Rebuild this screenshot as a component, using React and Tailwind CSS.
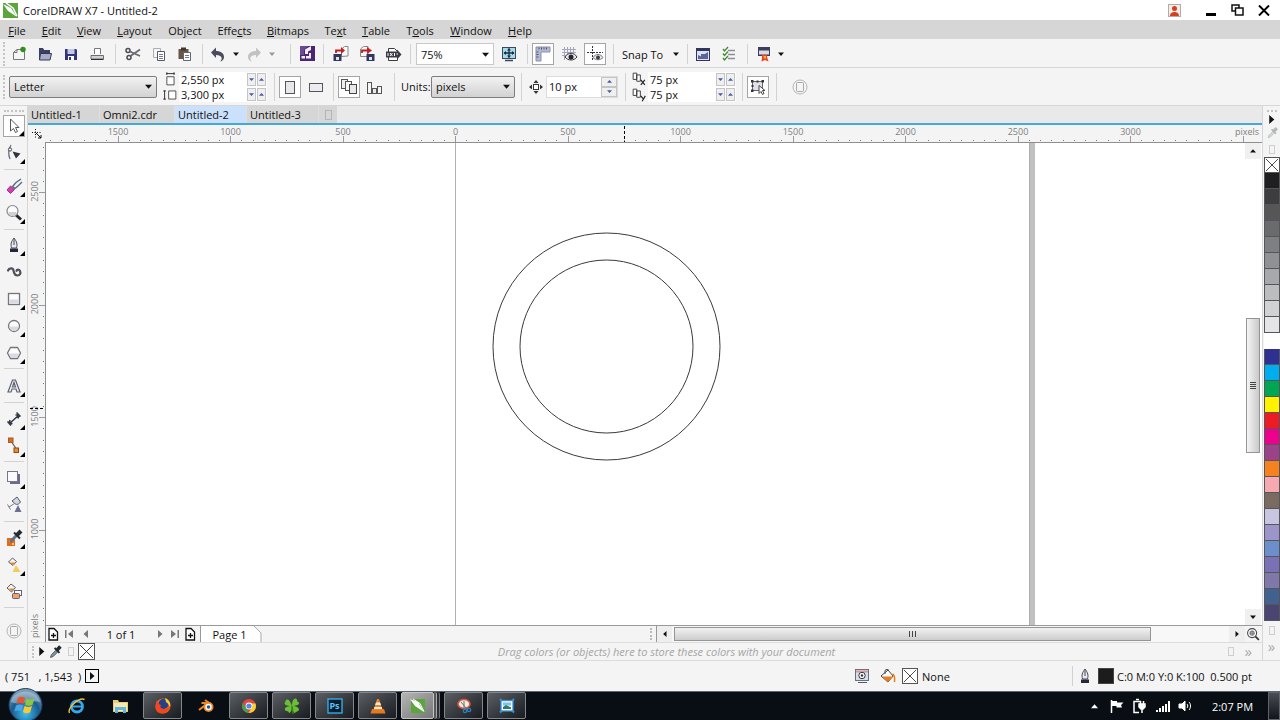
import React, { useState } from 'react';

const Icon = ({ size = 20, children, className = '' }) => (
  <svg
    xmlns="http://www.w3.org/2000/svg"
    width={size}
    height={size}
    viewBox="0 0 20 20"
    fill="none"
    className={`shrink-0 ${className}`}
  >
    {children}
  </svg>
);

const icons = {
  newDoc: (
    <>
      <path d="M4.500 15.500V8.500L8 5.500h7.500v10z" fill="#f6f6f6" stroke="#77777c" />
      <path d="M4.500 8.500H8v-3" stroke="#77777c" />
      <circle cx="14" cy="5.500" r="2.700" fill="#2f8f1f" />
    </>
  ),
  open: (
    <>
      <path d="M4 16V4h4l1 2h6v3" fill="#3c3f66" />
      <path d="M4 16V5h4l1 1.500h6V16z" fill="#3c3f66" />
      <path d="M5.500 9.500h11L15 16H4.500z" fill="#a9acc4" stroke="#33365c" />
    </>
  ),
  save: (
    <>
      <path d="M4 5h11l1 1v10H4z" fill="#33347a" />
      <rect x="6.500" y="5" width="7" height="5" fill="#c4c8e6" />
      <rect x="7" y="12" width="6" height="4" fill="#fff" />
      <rect x="8" y="13" width="2" height="3" fill="#33347a" />
    </>
  ),
  print: (
    <>
      <path d="M7.500 10V4.500h6V10" fill="#fff" stroke="#77777f" />
      <path d="M4 11.500h12.500v3.500H4z" fill="#d2d2d6" stroke="#6c6c72" />
      <path d="M4 15.500h12.500" stroke="#2f2f33" />
    </>
  ),
  cut: (
    <>
      <circle cx="5" cy="6.500" r="2" stroke="#4a4a52" strokeWidth="1.500" />
      <circle cx="6" cy="13.500" r="2" stroke="#4a4a52" strokeWidth="1.500" />
      <path d="M7 7.500l10 4.500M7.500 12L17 5.500" stroke="#6a6a70" strokeWidth="1.800" />
    </>
  ),
  copy: (
    <>
      <path d="M4.500 4.500h7v9h-7z" fill="#f4f6f6" stroke="#a9b0b0" />
      <path d="M8.500 7.500h7v9h-7z" fill="#fff" stroke="#55586e" />
      <path d="M10 10.500h4M10 12.500h4M10 14.500h4" stroke="#777b92" />
    </>
  ),
  paste: (
    <>
      <path d="M3.500 5h10v10h-10z" fill="#6a5546" />
      <rect x="6" y="3.500" width="5" height="3" fill="#43362e" />
      <path d="M8.500 8.500h7v8h-7z" fill="#fff" stroke="#5a6a70" />
      <path d="M10 11.500h4M10 13.500h4" stroke="#778" />
    </>
  ),
  undo: <path d="M3 8.500L8 3.500V7c5 0 8 2.500 8 6 0 2.500-1.500 4-4 4.500 1.500-1.500 2-2.500 1.500-4C13 12 11 11 8 11v3z" fill="#4a4c5e" />,
  redo: <path d="M17 8.500L12 3.500V7c-5 0-8 2.500-8 6 0 2.500 1.500 4 4 4.500-1.500-1.500-2-2.500-1.500-4C7 12 9 11 12 11v3z" fill="#c2c2c2" />,
  connect: (
    <>
      <rect x="3" y="2" width="15" height="15" fill="#4a2575" />
      <path d="M3 2h8L7 6v5H3z" fill="#6b4a94" />
      <path d="M8 5.500l6-3.500v4l-3 1.500V10H8z" fill="#f1ecf7" />
      <path d="M12 9h2v5.500H9V12h3zM4.500 12H8v2.500H4.500z" fill="#f1ecf7" />
    </>
  ),
  importIcon: (
    <>
      <path d="M10.500 12.500V5l3-2.500h3.500v9.500z" fill="#f8f8f8" stroke="#888" />
      <rect x="2.500" y="10" width="8" height="7" fill="#33365c" />
      <rect x="5" y="13" width="3" height="3" fill="#dfe1ee" />
      <path d="M5 9V6.500h6" stroke="#b52222" strokeWidth="1.800" />
      <path d="M10 3l4 3.500-4 3.500z" fill="#c42020" />
    </>
  ),
  exportIcon: (
    <>
      <path d="M3.500 12.500V5l3-2.500h4.500v10z" fill="#f8f8f8" stroke="#888" />
      <rect x="9.500" y="10" width="8" height="7" fill="#33365c" />
      <rect x="12" y="13" width="3" height="3" fill="#dfe1ee" />
      <path d="M5 9V6.500h6" stroke="#b52222" strokeWidth="1.800" />
      <path d="M10 3l5 3.500-5 3.500z" fill="#c42020" />
    </>
  ),
  pdf: (
    <>
      <path d="M5.500 16.500v-12h6l3 3v9z" fill="#fff" stroke="#3b3b40" />
      <path d="M3 7.500h11V5.500l4.500 5-4.500 5v-2H3z" fill="#3b3b44" />
      <path d="M5 9v3M7 9l2.500 3M9.500 9L7 12M11.500 9v3M13.500 10h1.500" stroke="#fff" />
    </>
  ),
  fullScreen: (
    <>
      <rect x="3.500" y="3.500" width="13" height="11" fill="#a5dbe8" stroke="#3a4a5c" />
      <path d="M6 16.500h8" stroke="#3a4a5c" strokeWidth="1.500" />
      <path d="M10 4.500v9M5 9h10" stroke="#1c2e44" strokeWidth="1.300" />
      <path d="M10 4L8 6.500h4zM10 14l-2-2.500h4zM4.500 9L7 7v4zM15.500 9L13 7v4z" fill="#1c2e44" />
    </>
  ),
  rulers: (
    <>
      <path d="M3 3h14v5H8v9H3z" fill="#b4b9d2" stroke="#8a8fac" />
      <path d="M6 3.500v2M8.500 3.500v2M11 3.500v2M13.500 3.500v2M3.500 8h2M3.500 10.500h2M3.500 13h2" stroke="#4d5273" />
    </>
  ),
  grid: (
    <>
      <path d="M5.500 3v13M8.500 3v10M11.500 3v5M14.500 3v5M3 5.500h14M3 8.500h14M3 11.500h5" stroke="#a4a7ba" />
      <path d="M6 13c3-5 9-5 12 0-3 4-9 4-12 0z" fill="#e9e9ec" stroke="#36363c" />
      <circle cx="12" cy="13" r="2.500" fill="#26262a" />
    </>
  ),
  guides: (
    <>
      <path d="M2 8.500h16M7.500 2v15" stroke="#333" strokeDasharray="2 1" />
      <path d="M8 13.500c2.500-4 7.500-4 10 0-2.500 3-7.500 3-10 0z" fill="#e9e9ec" stroke="#77777d" />
      <circle cx="13" cy="13.500" r="2" fill="#3b3b40" />
    </>
  ),
  welcome: (
    <>
      <rect x="3.500" y="4.500" width="13" height="12" fill="#dfe2f0" stroke="#33365c" />
      <rect x="3" y="4" width="14" height="3" fill="#33365c" />
      <path d="M5 15v-4l3 1.500V10h4l3-2v7z" fill="#5e649a" />
    </>
  ),
  options: (
    <>
      <path d="M4 5l1.500 2L9 3M4 9.500l1.500 2L9 7.500M4 14l1.500 2L9 12" stroke="#3f8a35" strokeWidth="1.300" />
      <path d="M9 6.500h7M9 10.500h7M9 14.500h7" stroke="#8d9098" strokeWidth="1.500" />
    </>
  ),
  launcher: (
    <>
      <rect x="4" y="3" width="12" height="9" fill="#3a3f5e" />
      <rect x="5" y="6.500" width="10" height="4" fill="#d9dbe6" />
      <path d="M8 11h5v2l1.500 4.500-3.500-1.500-3.500 1.500L8 14z" fill="#e8461e" />
      <path d="M9.500 12h2.500v2.500h-2z" fill="#fbb32b" />
    </>
  ),
  width: (
    <>
      <path d="M6.500 7.500h8v9h-8z" fill="#fff" stroke="#444" />
      <path d="M6 4h9M6.500 2.500v3M14.500 2.500v3" stroke="#222" />
    </>
  ),
  height: (
    <>
      <path d="M8.500 5.500h8v9h-8z" fill="#fff" stroke="#444" />
      <path d="M4 5v10M2.500 5.500h3M2.500 14.500h3" stroke="#222" />
    </>
  ),
  portrait: <rect x="5.500" y="4.500" width="9" height="12" fill="#e7e7ec" stroke="#55555c" />,
  landscape: <rect x="3.500" y="6.500" width="13" height="8" fill="#ececf0" stroke="#55555c" />,
  allPages: (
    <>
      <rect x="2.500" y="2.500" width="6" height="9" fill="#eee" stroke="#555" />
      <rect x="6.500" y="4.500" width="6" height="9" fill="#f6f6f6" stroke="#555" />
      <rect x="10.500" y="7.500" width="7" height="9" fill="#e7e7ec" stroke="#444" />
    </>
  ),
  curPage: (
    <>
      <rect x="2.500" y="5.500" width="4" height="11" fill="#f6f6f6" stroke="#555" />
      <rect x="7.500" y="11.500" width="4" height="5" fill="#e7e7ec" stroke="#555" />
      <rect x="12.500" y="9.500" width="4" height="7" fill="#f6f6f6" stroke="#555" />
    </>
  ),
  nudge: (
    <>
      <rect x="7.500" y="7.500" width="5" height="5" fill="#fff" stroke="#333" />
      <path d="M10 3L7.500 6h5zM10 17l-2.500-3h5zM3 10l3-2.500v5zM17 10l-3-2.500v5z" fill="#333" />
    </>
  ),
  dupX: (
    <>
      <path d="M3.500 3.500h4v7h-4zM7.500 5.500h4v7h-4z" fill="#fff" stroke="#333" />
      <path d="M12 11l4.500 5.500M16.500 11L12 16.500" stroke="#222" strokeWidth="1.300" />
    </>
  ),
  dupY: (
    <>
      <path d="M3.500 3.500h4v7h-4zM7.500 5.500h4v7h-4z" fill="#fff" stroke="#333" />
      <path d="M12 11l2.500 3M17 11l-3.500 6" stroke="#222" strokeWidth="1.300" />
    </>
  ),
  treat: (
    <>
      <rect x="4.500" y="4.500" width="10" height="9" fill="#dfe0ea" stroke="#666" />
      <path d="M3 3h2.500v2.500H3zM13.500 3H16v2.500h-2.500zM3 12.500h2.500V15H3zM8.500 3.500h2v2h-2zM3.500 8h2v2h-2z" fill="#333" />
      <path d="M11 8.500v8l2-2 1.500 3 1.500-1-1.500-3H17z" fill="#fff" stroke="#444" />
    </>
  ),
  quick: (
    <>
      <circle cx="10" cy="10" r="7" stroke="#b5b5b5" />
      <rect x="6.500" y="5.500" width="7" height="9" rx="1" fill="#f4f4f4" stroke="#a9a9a9" />
    </>
  ),
  pick: <path d="M6.500 3v12l3-2.500 2 4 2-1-2-4h3.500z" fill="#fff" stroke="#55555c" />,
  shape: (
    <>
      <path d="M7 2c-3 5-3 9-1 14" stroke="#66708a" strokeWidth="1.300" />
      <circle cx="6" cy="6.500" r="1.600" fill="#fff" stroke="#444" />
      <path d="M8.500 8.500l8 2-4.500 5z" fill="#2d3340" />
    </>
  ),
  eraser: (
    <>
      <path d="M3 14l3.500-4 4 3.500-4 4z" fill="#d33fb0" stroke="#a82d8c" />
      <path d="M8 10l3 3" stroke="#6c7588" strokeWidth="2" />
      <path d="M9 10l3-3.500L17 3M11 12.500l3.500-3L18 6" stroke="#5a6a80" strokeWidth="1.400" />
    </>
  ),
  zoom: (
    <>
      <path d="M12 12l5 4.500" stroke="#22252e" strokeWidth="3" />
      <circle cx="8.500" cy="8" r="5.500" fill="#fbfbfc" stroke="#85858c" strokeWidth="1.200" />
      <path d="M4.500 9h8a4 4 0 0 1-8 0z" fill="#cfcfd6" />
    </>
  ),
  pen: (
    <>
      <path d="M10 3c3 4 3.500 6 2.500 10h-5C6.500 9 7 7 10 3z" fill="#e9e9ee" stroke="#444a58" />
      <path d="M10 4v6" stroke="#444a58" />
      <rect x="6" y="13.500" width="8" height="3.500" fill="#222835" />
    </>
  ),
  artistic: (
    <path
      d="M4 8.500C5 6 9 5.500 9.500 8.500c.500 3 1.500 5 4 5s3.500-2.500 2.500-4.500-3.500-1.500-3.500 0"
      stroke="#50505a"
      strokeWidth="2.200"
      strokeLinecap="round"
    />
  ),
  rect: (
    <>
      <rect x="4.500" y="4.500" width="11" height="11" fill="#fdfdfd" stroke="#75757e" strokeWidth="1.300" />
      <path d="M5.500 10.500h9v4h-9z" fill="#dadae2" />
    </>
  ),
  ellipse: (
    <>
      <circle cx="10" cy="10" r="5.500" fill="#fdfdfd" stroke="#75757e" strokeWidth="1.300" />
      <path d="M5.500 10.500h9a4.500 4.500 0 0 1-9 0z" fill="#dadae2" />
    </>
  ),
  polygon: (
    <>
      <path d="M6.500 4.500h7l3 5.500-3 5.500h-7L3.500 10z" fill="#fdfdfd" stroke="#75757e" strokeWidth="1.300" />
      <path d="M5 10.500h10l-2 4H7z" fill="#dadae2" />
    </>
  ),
  textTool: (
    <path
      d="M4 16l4.500-12h3L16 16h-3l-1-3H8l-1 3zM8.500 11h3L10 6.500z"
      fill="#f2f2f6"
      stroke="#5d6070"
      strokeWidth="1.200"
    />
  ),
  dimension: <path d="M3.500 12.500l3.500 4M5 15l10-9M12.500 3.500l4 4M5 15l1-4M5 15l3.500-.500M15 6l-1 3.500M15 6h-3.500" stroke="#333845" strokeWidth="1.500" />,
  connector: (
    <>
      <path d="M7 5l6 9" stroke="#5a5a60" strokeWidth="1.200" />
      <rect x="4.500" y="2" width="4.500" height="4.500" fill="#d96d1c" stroke="#a85a20" />
      <rect x="10" y="12" width="4.500" height="4.500" fill="#f08a2d" stroke="#8f4a15" />
    </>
  ),
  shadow: (
    <>
      <rect x="6" y="6" width="10" height="10" fill="#6c6c8a" />
      <rect x="3.500" y="3.500" width="10" height="10" fill="#fbfbfd" stroke="#77778a" />
    </>
  ),
  transparency: (
    <>
      <path d="M8 6l5-4 3.500 5c-2 3-5 3-6 1z" fill="#d4d6e4" stroke="#565a78" />
      <path d="M10.500 8.500L5 12M3.500 9.500l3 5" stroke="#77778a" />
      <path d="M14 10l3.500 7h-7z" fill="#6d7090" />
    </>
  ),
  eyedropper: (
    <>
      <rect x="3" y="10" width="8" height="8" fill="#e66a13" />
      <path d="M5 12h2v2H5zM8 15h2v2H8z" fill="#ffc878" />
      <path d="M6 14l7-7" stroke="#62718a" strokeWidth="3" />
      <path d="M10 4.500l6 6" stroke="#262a33" strokeWidth="2" />
      <path d="M13 7l4-4" stroke="#262a33" strokeWidth="4" />
    </>
  ),
  fill: (
    <>
      <path d="M4.500 7l4-4 4 3.500-3.500 4z" fill="#f7f3ec" stroke="#5c5c66" />
      <path d="M5.500 7.500h6L9 10z" fill="#e08a2c" />
      <path d="M12 10l4.500 7h-8z" fill="#f5c860" />
    </>
  ),
  smartFill: (
    <>
      <path d="M3 6l4-4 4.500 3.500-4 4.500z" fill="#f7f3ec" stroke="#5c5c66" />
      <path d="M4.500 6.500h6L7.500 9z" fill="#e08a2c" />
      <rect x="10.500" y="8.500" width="7" height="5" fill="#fff" stroke="#66607a" />
      <rect x="8.500" y="11.500" width="7" height="5" rx="1" fill="#f0a566" stroke="#66607a" />
    </>
  ),
  dropperSmall: (
    <>
      <path d="M5 16l1-3 5-5 2 2-5 5z" fill="#7c96a0" stroke="#4a5560" />
      <path d="M9.500 5.500l5.500 5.500" stroke="#22262e" strokeWidth="2" />
      <path d="M12 8l4-4" stroke="#22262e" strokeWidth="4" />
    </>
  ),
  addPage: (
    <>
      <path d="M6 4.500h5l3.500 3.500v8H6z" fill="#fff" stroke="#111" strokeWidth="1.300" />
      <path d="M10.500 9v5M8 11.500h5" stroke="#111" strokeWidth="1.300" />
    </>
  ),
  navZoom: (
    <>
      <path d="M12 12l4.500 4.500" stroke="#33333c" strokeWidth="2" />
      <circle cx="9" cy="9" r="5" fill="#fff" stroke="#44444e" strokeWidth="1.200" />
      <path d="M9 6v6M6 9h6M7 7h4v4H7z" stroke="#66666e" />
    </>
  ),
  proof: (
    <>
      <rect x="3.500" y="3.500" width="13" height="11" fill="#d9dcec" stroke="#6a6f86" />
      <path d="M4 5.500h12" stroke="#d79a9a" strokeWidth="2" />
      <path d="M6 16.500h9" stroke="#55596e" />
      <circle cx="10" cy="9.500" r="3.200" fill="#fff" stroke="#33333a" />
      <circle cx="10" cy="9.500" r="1.200" fill="#33333a" />
    </>
  ),
  bucket: (
    <>
      <path d="M3 10l7-6 5 6-5 6z" fill="#fff" stroke="#44444c" />
      <path d="M4 10.500h11L10 16z" fill="#e77e1b" />
      <path d="M7 8V4.500a2.500 2.500 0 0 1 4 0" stroke="#44444c" />
      <path d="M14.500 8c2 1 2.500 4 2 8" stroke="#e77e1b" strokeWidth="1.500" />
    </>
  ),
};

const Chevron = ({ dir = 'down', size = 8, color = '#111' }) => (
  <svg width={size} height={size} viewBox="0 0 8 8" className="shrink-0" fill={color}>
    {dir === 'down' && <path d="M0 2h8L4 6.500z" />}
    {dir === 'up' && <path d="M0 6h8L4 1.500z" />}
    {dir === 'left' && <path d="M6 0v8L1.500 4z" />}
    {dir === 'right' && <path d="M2 0v8L6.500 4z" />}
  </svg>
);

const ToolButton = ({ name, label, active, flyout }) => (
  <button
    aria-label={label}
    className={`relative flex h-[22px] w-[22px] shrink-0 items-center justify-center ${
      active ? 'border border-[#a5a5a5] bg-white' : ''
    }`}
  >
    <Icon>{icons[name]}</Icon>
    {flyout && (
      <svg width="5" height="5" viewBox="0 0 5 5" className="absolute right-0 bottom-0">
        <path d="M5 0v5H0z" fill="#000" />
      </svg>
    )}
  </button>
);

const Group = ({ className = '', children }) => (
  <div className={`flex shrink-0 items-center border-r border-[#d2d2d2] ${className}`}>{children}</div>
);

const Grip = () => <div className="h-6 w-px shrink-0 border-l-2 border-dotted border-[#c4c4c4]" />;

const Spinner = ({ label, value, stacked }) => {
  const [text, setText] = useState(value);
  return (
    <div className={`flex items-center bg-white ${stacked ? 'h-[22px] w-[72px] border border-[#dcdcdc]' : 'h-[15px] w-[88px]'}`}>
      <input
        aria-label={label}
        value={text}
        onChange={(e) => setText(e.target.value)}
        className="w-full min-w-0 flex-1 bg-transparent pl-0.5 outline-none"
      />
      <div className={`flex shrink-0 ${stacked ? 'flex-col-reverse' : 'gap-px pr-px'}`}>
        {['down', 'up'].map((dir) => (
          <button
            key={dir}
            aria-label={`${label} ${dir}`}
            className={`flex items-center justify-center border border-[#c4c4c4] bg-[#efefef] ${
              stacked ? 'h-2.5 w-4' : 'h-[13px] w-[9px]'
            }`}
          >
            <Chevron dir={dir} size={5} color="#4b5aa0" />
          </button>
        ))}
      </div>
    </div>
  );
};

const Dropdown = ({ label, value, className }) => (
  <div className={`relative shrink-0 ${className}`}>
    <select aria-label={label} defaultValue={value} className="h-full w-full appearance-none bg-transparent pl-1 outline-none">
      <option>{value}</option>
    </select>
    <span className="pointer-events-none absolute top-0 right-1 flex h-full items-center">
      <Chevron size={7} />
    </span>
  </div>
);

const menus = [
  ['', 'F', 'ile', 'w-[34px]'],
  ['', 'E', 'dit', 'w-[35px]'],
  ['', 'V', 'iew', 'w-10'],
  ['', 'L', 'ayout', 'w-[51px]'],
  ['Ob', 'j', 'ect', 'w-[50px]'],
  ['Effe', 'c', 'ts', 'w-[49px]'],
  ['', 'B', 'itmaps', 'w-[58px]'],
  ['Te', 'x', 't', 'w-[37px]'],
  ['', 'T', 'able', 'w-11'],
  ['T', 'o', 'ols', 'w-11'],
  ['', 'W', 'indow', 'w-[58px]'],
  ['', 'H', 'elp', 'w-10'],
];

const swatches = [
  '#1f1f1f', '#3d3d3d', '#565656', '#6a6b6d', '#7d7f82', '#8f9194', '#a6a8ab', '#bbbdbf', '#d0d2d3', '#e5e5e6', '#ffffff',
  '#2e3192', '#00aeef', '#00a651', '#fff200', '#ed1c24', '#ec008c', '#9c4288', '#f5821f', '#f6a9b1', '#7a6a5f',
  '#c7c5e0', '#9b95c9', '#6b8fcb', '#7a70b5', '#8078a8', '#41618f', '#4a4570',
];

function TitleBar() {
  return (
    <header className="flex h-5 shrink-0 items-center bg-white pr-2.5 pl-[3px]">
      <svg width="15" height="15" viewBox="0 0 15 15">
        <rect width="15" height="15" fill="#5aa53c" />
        <path d="M0 1l8 4 6 9-9-6z" fill="#fff" />
        <path d="M3 0l7 5 4 8" stroke="#fff" strokeWidth="1.500" fill="none" />
      </svg>
      <h1 className="flex-1 pl-[5px] whitespace-pre">CoreIDRAW X7 - Untitled-2</h1>
      <button aria-label="Account" className="mr-[25px]">
        <svg width="13" height="13" viewBox="0 0 13 13">
          <rect x=".5" y=".5" width="12" height="12" fill="#f3ece8" stroke="#b5aaa5" />
          <circle cx="6.500" cy="4.500" r="2.500" fill="#d2421f" />
          <path d="M2 12c0-3 2-3.500 3.500-4h2c1.500.500 3.500 1 3.500 4z" fill="#d2421f" />
        </svg>
      </button>
      <button aria-label="Minimize" className="mr-[15px] mt-2 h-[3px] w-2.5 bg-black" />
      <button aria-label="Restore" className="mr-3.5">
        <svg width="13" height="12" viewBox="0 0 13 12" fill="#fff" stroke="#111" strokeWidth="1.500">
          <rect x="1" y="1" width="7" height="6" />
          <rect x="4.500" y="4" width="7.500" height="7" />
        </svg>
      </button>
      <button aria-label="Close">
        <svg width="12" height="11" viewBox="0 0 12 11" stroke="#000" strokeWidth="2">
          <path d="M1 .5l10 10M11 .5l-10 10" />
        </svg>
      </button>
    </header>
  );
}

function StandardBar() {
  return (
    <div className="flex h-[29px] shrink-0 items-center border-b border-[#d6d6d6] bg-[#f4f4f4] pt-0.5 pl-[3px]">
      <Grip />
      <Group className="h-5 w-[111px] gap-1 pl-[3px]">
        <ToolButton name="newDoc" label="New" />
        <ToolButton name="open" label="Open" />
        <ToolButton name="save" label="Save" />
        <ToolButton name="print" label="Print" />
      </Group>
      <Group className="h-5 w-[87px] justify-center gap-1">
        <ToolButton name="cut" label="Cut" />
        <ToolButton name="copy" label="Copy" />
        <ToolButton name="paste" label="Paste" />
      </Group>
      <Group className="h-5 w-[88px] gap-1 pl-1">
        <ToolButton name="undo" label="Undo" />
        <Chevron size={6} />
        <ToolButton name="redo" label="Redo" />
        <Chevron size={6} color="#999" />
      </Group>
      <Group className="h-5 w-[33px] justify-center">
        <ToolButton name="connect" label="Search content" />
      </Group>
      <Group className="h-5 w-[87px] justify-center gap-1">
        <ToolButton name="importIcon" label="Import" />
        <ToolButton name="exportIcon" label="Export" />
        <ToolButton name="pdf" label="Publish to PDF" />
      </Group>
      <Group className="h-5 w-[117px] gap-1 pl-[5px]">
        <Dropdown label="Zoom level" value="75%" className="h-[22px] w-[78px] border border-[#c9c9c9] bg-white" />
        <ToolButton name="fullScreen" label="Full-screen preview" />
      </Group>
      <Group className="h-5 w-[86px] gap-1 pl-1">
        <ToolButton name="rulers" label="Show rulers" active />
        <ToolButton name="grid" label="Show grid" />
        <ToolButton name="guides" label="Show guidelines" active />
      </Group>
      <Group className="h-5 w-[74px]">
        <button className="flex flex-1 items-center justify-between px-2">
          Snap To
          <Chevron size={6} />
        </button>
      </Group>
      <Group className="h-5 w-[60px] gap-1 pl-1">
        <ToolButton name="welcome" label="Welcome screen" />
        <ToolButton name="options" label="Options" />
      </Group>
      <button aria-label="Application launcher" className="flex items-center gap-1 pl-1.5">
        <Icon>{icons.launcher}</Icon>
        <Chevron size={6} />
      </button>
    </div>
  );
}

function PropertyBar() {
  return (
    <div className="flex h-[38px] shrink-0 items-center border-b border-[#d6d6d6] bg-[#f4f4f4] pl-[3px]">
      <Grip />
      <Group className="h-7 w-[270px] pl-1">
        <Dropdown
          label="Page size"
          value="Letter"
          className="h-[22px] w-[148px] rounded-xs border border-[#7d7d7d] bg-linear-to-b from-[#f2f2f2] to-[#d2d2d2]"
        />
        <div className="ml-1 flex flex-col">
          <Icon size={18} className="-my-px">{icons.width}</Icon>
          <Icon size={18} className="-my-px">{icons.height}</Icon>
        </div>
        <div className="flex flex-col">
          <Spinner label="Page width" value="2,550 px" />
          <Spinner label="Page height" value="3,300 px" />
        </div>
      </Group>
      <Group className="h-7 w-[59px] pl-1 gap-1">
        <ToolButton name="portrait" label="Portrait" active />
        <ToolButton name="landscape" label="Landscape" />
      </Group>
      <Group className="h-7 w-[61px] pl-1 gap-1">
        <ToolButton name="allPages" label="All pages" active />
        <ToolButton name="curPage" label="Current page" />
      </Group>
      <Group className="h-7 w-[127px] justify-between pr-1.5 pl-1.5">
        <span>Units:</span>
        <Dropdown
          label="Units"
          value="pixels"
          className="h-[22px] w-[84px] rounded-xs border border-[#7d7d7d] bg-linear-to-b from-[#f2f2f2] to-[#d2d2d2]"
        />
      </Group>
      <Group className="h-7 w-[104px] pl-1">
        <Icon>{icons.nudge}</Icon>
        <Spinner label="Nudge distance" value="10 px" stacked />
      </Group>
      <Group className="h-7 w-[117px] pl-1">
        <div className="flex flex-col">
          <Icon size={18} className="-my-px">{icons.dupX}</Icon>
          <Icon size={18} className="-my-px">{icons.dupY}</Icon>
        </div>
        <div className="flex flex-col">
          <Spinner label="Duplicate X" value="75 px" />
          <Spinner label="Duplicate Y" value="75 px" />
        </div>
      </Group>
      <Group className="h-7 w-[34px] pl-1">
        <ToolButton name="treat" label="Treat as filled" active />
      </Group>
      <div className="pl-3">
        <ToolButton name="quick" label="Customize" />
      </div>
    </div>
  );
}

const toolGroups = [
  { tools: ['pick', 'shape'], height: 'h-14 pb-1' },
  { tools: ['eraser', 'zoom'], height: 'h-[60px]' },
  { tools: ['pen', 'artistic', 'rect', 'ellipse', 'polygon'], height: 'h-[139px]' },
  { tools: ['textTool'], height: 'h-[34px]' },
  { tools: ['dimension', 'connector'], height: 'h-[59px]' },
  { tools: ['shadow', 'transparency'], height: 'h-[60px]' },
  { tools: ['eyedropper', 'fill', 'smartFill'], height: 'h-[86px]' },
];
const noFlyout = ['artistic', 'transparency', 'smartFill'];

function Toolbox() {
  return (
    <aside className="flex w-7 shrink-0 flex-col items-center border-r border-[#d6d6d6] bg-[#f4f4f4] pt-1">
      <div className="h-1 w-5 border-t-2 border-dotted border-[#c4c4c4]" />
      {toolGroups.map((group) => (
        <div
          key={group.tools[0]}
          className={`flex w-5 shrink-0 flex-col items-center justify-center gap-[5px] border-b border-[#d2d2d2] ${group.height}`}
        >
          {group.tools.map((t) => (
            <ToolButton key={t} name={t} label={t} active={t === 'pick'} flyout={!noFlyout.includes(t)} />
          ))}
        </div>
      ))}
      <div className="flex flex-col pt-3">
        <ToolButton name="quick" label="Customize toolbox" />
      </div>
    </aside>
  );
}

const docs = [
  { name: 'Untitled-1', width: 'w-[72px]' },
  { name: 'Omni2.cdr', width: 'w-[75px]' },
  { name: 'Untitled-2', width: 'w-[72px]' },
  { name: 'Untitled-3', width: 'w-[72px]' },
];

function DocTabs() {
  const [current, setCurrent] = useState('Untitled-2');
  return (
    <div className="flex h-[19px] shrink-0 border-b-2 border-[#45a9d6] bg-[#e9e9e9]">
      {docs.map((doc) => (
        <button
          key={doc.name}
          onClick={() => setCurrent(doc.name)}
          className={`border-r border-[#dfdfdf] pl-[3px] text-left ${doc.width} ${
            doc.name === current ? 'bg-[#cbe1fb]' : 'bg-[#d6d6d6]'
          }`}
        >
          {doc.name}
        </button>
      ))}
      <button aria-label="New tab" className="flex w-[18px] items-center justify-center bg-[#d6d6d6]">
        <span className="h-2.5 w-[7px] border border-[#b5b5b5]" />
      </button>
    </div>
  );
}

const range = (from, to) => Array.from({ length: to - from + 1 }, (_, i) => from + i);

// 500 px on the page are 112.5 px on screen, a minor tick every 50
const STEP = 11.25;

function HorizontalRuler() {
  return (
    <svg className="h-full min-w-0 flex-1 bg-[#f4f4f4]" fontSize="9" fill="#808080">
      {range(-36, 70).map((n) => {
        const x = 410.5 + n * STEP;
        const major = n % 10 === 0;
        return (
          <React.Fragment key={n}>
            <path
              d={`M${Math.floor(x) + 0.5} ${major ? 11 : 15}v${major ? 6 : 1}`}
              stroke={major ? '#9a9a9a' : '#777'}
            />
            {major && n <= 60 && (
              <text x={x} y="10" textAnchor="middle">
                {Math.abs(n * 50)}
              </text>
            )}
          </React.Fragment>
        );
      })}
      <path d="M579.500 1v16" stroke="#000" strokeDasharray="3 2" />
      <text x="1202" y="10" textAnchor="middle">pixels</text>
    </svg>
  );
}

function VerticalRuler() {
  return (
    <svg className="w-[17px] shrink-0 bg-[#f4f4f4]" fontSize="9" fill="#808080">
      {range(-4, 38).map((n) => {
        const y = 50.5 + n * STEP;
        const major = n % 10 === 0;
        return (
          <React.Fragment key={n}>
            <path
              d={`M${major ? 11 : 15} ${Math.floor(y) + 0.5}h${major ? 6 : 1}`}
              stroke={major ? '#9a9a9a' : '#777'}
            />
            {major && (
              <text transform={`translate(10 ${y - 1}) rotate(-90)`} textAnchor="middle">
                {2500 - n * 50}
              </text>
            )}
          </React.Fragment>
        );
      })}
      <path d="M2 266.500h15" stroke="#000" strokeDasharray="3 2" />
      <text transform="translate(10 484) rotate(-90)" textAnchor="middle">pixels</text>
    </svg>
  );
}

function Canvas() {
  return (
    <div className="flex min-h-0 flex-1 border-b border-[#9a9a9a] bg-white">
      <svg className="h-full min-w-0 flex-1">
        <path d="M409.500 0v800" stroke="#b0b0b0" />
        <rect x="983" y="0" width="6" height="800" fill="#c0c0c0" />
        <path d="M983.500 0v800" stroke="#adadad" />
        <circle cx="560.500" cy="203.500" r="113.500" fill="none" stroke="#3a3a3a" />
        <circle cx="560.500" cy="203.500" r="86.500" fill="none" stroke="#3a3a3a" />
      </svg>
      <div className="mr-px flex w-4 shrink-0 flex-col items-center">
        <button aria-label="Scroll up" className="flex h-4 w-full items-center justify-center bg-[#f0f0f0]">
          <Chevron dir="up" size={6} />
        </button>
        <div className="flex-79" />
        <div className="flex h-[135px] w-3.5 flex-col items-center justify-center gap-px border border-[#959595] bg-linear-to-r from-[#f5f5f5] to-[#c9c9c9]">
          <span className="h-px w-1.5 bg-[#444]" />
          <span className="h-px w-1.5 bg-[#444]" />
          <span className="h-px w-1.5 bg-[#444]" />
          <span className="h-px w-1.5 bg-[#444]" />
        </div>
        <div className="flex-78" />
        <button aria-label="Scroll down" className="flex h-4 w-full items-center justify-center bg-[#f0f0f0]">
          <Chevron dir="down" size={6} />
        </button>
      </div>
    </div>
  );
}

const JumpIcon = ({ flip }) => (
  <svg width="8" height="8" viewBox="0 0 8 8" fill="#777" className={flip ? 'rotate-180' : ''}>
    <path d="M0 0h1.500v8H0zM8 0v8L3 4z" />
  </svg>
);

function PageBar() {
  return (
    <div className="flex h-4 shrink-0 items-center bg-[#f4f4f4]">
      <button aria-label="Add page before" className="-ml-[3px]"><Icon>{icons.addPage}</Icon></button>
      <button aria-label="First page" className="ml-0.5"><JumpIcon /></button>
      <button aria-label="Previous page" className="ml-[9px]"><Chevron dir="left" color="#777" /></button>
      <span className="w-[62px] text-center">1 of 1</span>
      <button aria-label="Next page" className="ml-1"><Chevron dir="right" color="#777" /></button>
      <button aria-label="Last page" className="ml-[7px]"><JumpIcon flip /></button>
      <button aria-label="Add page after" className="ml-px"><Icon>{icons.addPage}</Icon></button>
      <button className="relative h-full w-[62px] border-l border-[#999] bg-white pr-1">
        Page 1
        <svg width="9" height="16" viewBox="0 0 9 16" className="absolute top-0 right-0">
          <path d="M1 0h8v16H8V7z" fill="#f4f4f4" />
          <path d="M1 0l7 7v9" stroke="#aaa" fill="none" />
        </svg>
      </button>
      <div className="flex-388" />
      <div className="mr-1 h-3 border-l-2 border-dotted border-[#bbb]" />
      <button aria-label="Scroll left" className="flex h-full w-4 shrink-0 items-center justify-center border-l border-[#999] bg-[#eee]">
        <Chevron dir="left" size={6} />
      </button>
      <div className="flex h-full flex-477 items-center bg-[#f8f8f8] pr-[78px] pl-0.5">
        <div className="flex h-3.5 flex-1 items-center justify-center gap-0.5 border border-[#959595] bg-linear-to-b from-[#f2f2f2] to-[#cdcdcd]">
          <span className="h-1.5 w-px bg-[#444]" />
          <span className="h-1.5 w-px bg-[#444]" />
          <span className="h-1.5 w-px bg-[#444]" />
        </div>
      </div>
      <button aria-label="Scroll right" className="flex h-full w-4 shrink-0 items-center justify-center bg-[#eee]">
        <Chevron dir="right" size={6} />
      </button>
      <button aria-label="Navigator" className="mr-px flex w-4 shrink-0 justify-center"><Icon size={18}>{icons.navZoom}</Icon></button>
    </div>
  );
}

const NoColor = ({ className = 'h-4 w-4' }) => (
  <svg viewBox="0 0 16 16" className={`shrink-0 border border-[#555] bg-white ${className}`} stroke="#333">
    <path d="M1 1l14 14M15 1L1 15" />
  </svg>
);

const PageOutline = () => <span className="h-[9px] w-1.5 shrink-0 border border-[#cfcfcf]" />;

function DocPalette() {
  return (
    <div className="flex h-[18px] shrink-0 items-center border-t border-[#dcdcdc] bg-[#f4f4f4] pr-2.5 pl-1">
      <div className="h-3 w-px border-l-2 border-dotted border-[#c4c4c4]" />
      <button aria-label="Palette menu" className="ml-[3px]"><Chevron dir="right" size={9} /></button>
      <button aria-label="Pick color"><Icon size={18}>{icons.dropperSmall}</Icon></button>
      <span className="flex w-[14px] justify-center"><PageOutline /></span>
      <NoColor className="h-[17px] w-[17px]" />
      <p className="flex-1 pl-2.5 text-center text-[#a5a5a5] italic">
        Drag colors (or objects) here to store these colors with your document
      </p>
      <PageOutline />
      <span className="w-[18px] text-right text-[15px] leading-none text-[#aaa]">»</span>
    </div>
  );
}

function ColorPalette() {
  return (
    <aside className="flex w-[18px] shrink-0 flex-col items-center border-l border-[#d6d6d6] bg-[#f4f4f4] pt-1">
      <div className="w-2.5 border-t-2 border-dotted border-[#c4c4c4]" />
      <button aria-label="Palette menu" className="mt-px flex h-3 items-center"><Chevron dir="right" size={9} /></button>
      <Icon size={16} className="opacity-30">{icons.dropperSmall}</Icon>
      <span className="flex h-4 items-center"><PageOutline /></span>
      <button aria-label="No color"><NoColor /></button>
      {swatches.map((color) => (
        <button
          key={color}
          aria-label={color}
          className={`h-4 w-4 shrink-0 ${color === '#ffffff' ? '' : 'border border-t-0 border-[#55555a]'}`}
          style={{ backgroundColor: color }}
        />
      ))}
      <span className="flex h-[18px] items-center"><PageOutline /></span>
      <span className="text-[15px] leading-none text-[#aaa]">»</span>
    </aside>
  );
}

function StatusBar() {
  return (
    <footer className="flex h-[31px] shrink-0 items-center border-t border-[#dcdcdc] bg-[#f4f4f4]">
      <div className="flex flex-1 items-center pl-[5px]">
        <span className="w-20 whitespace-pre">( 751   , 1,543  )</span>
        <button aria-label="Status options" className="flex h-3.5 w-3.5 items-center justify-center border border-black">
          <Chevron dir="right" />
        </button>
      </div>
      <Group className="h-5 w-[221px]">
        <Icon>{icons.proof}</Icon>
        <Icon className="ml-1.5">{icons.bucket}</Icon>
        <NoColor className="ml-1 h-4 w-4" />
        <span className="pl-1">None</span>
      </Group>
      <div className="flex w-[207px] items-center pl-0.5">
        <Icon>{icons.pen}</Icon>
        <span className="mx-[3px] h-4 w-4 border border-[#444] bg-[#1c1c1c]" />
        <span className="whitespace-pre">C:0 M:0 Y:0 K:100  0.500 pt</span>
      </div>
    </footer>
  );
}

const apps = [
  {
    name: 'Internet Explorer',
    art: (
      <>
        <circle cx="10" cy="10.500" r="5.500" stroke="#35a8ea" strokeWidth="2.800" />
        <path d="M5 10.500h10" stroke="#35a8ea" strokeWidth="2" />
        <path d="M2.500 17C0 12 12 1 17.500 3.500" stroke="#f2c230" strokeWidth="1.400" />
      </>
    ),
  },
  {
    name: 'Explorer',
    art: (
      <>
        <path d="M3 4h5l1 2h9v10H3z" fill="#e8cd78" />
        <path d="M4 7h13v8H4z" fill="#f7e9ae" />
        <path d="M5 11h11v6h-3v-3H8v3H5z" fill="#62b4e3" />
      </>
    ),
  },
  {
    name: 'Firefox',
    open: true,
    art: (
      <>
        <circle cx="10" cy="10" r="7.500" fill="#f06a1c" />
        <circle cx="10.500" cy="8" r="5" fill="#23408f" />
        <path d="M4 4c0 3 1 4 4 5-1 2-1 4 3 4 3 0 5-2 5-5 2 5-2 9.500-7 9.500S1 13 3 7z" fill="#f3461d" />
        <path d="M12 2c5 2 6 6 5 9-1-2-2-4-4-5z" fill="#fdc92f" />
      </>
    ),
  },
  {
    name: 'Blender',
    art: (
      <>
        <path d="M3 14l9-7H5.500M9 4l7 5" stroke="#ee8624" strokeWidth="2" />
        <circle cx="12.500" cy="11" r="5" fill="#ee8624" />
        <circle cx="12.500" cy="11" r="3.200" fill="#fff" />
        <circle cx="12.500" cy="11" r="1.800" fill="#22588f" />
      </>
    ),
  },
  {
    name: 'Chrome',
    open: true,
    art: (
      <>
        <circle cx="10" cy="10" r="7" fill="#e1483b" />
        <path d="M3.800 7L10 17a7 7 0 0 1-6.200-10z" fill="#38a755" />
        <path d="M16.500 7.500H10L12 13l-2.500 4A7 7 0 0 0 16.500 7.500z" fill="#f8cf2e" />
        <circle cx="10" cy="10" r="3.400" fill="#fff" />
        <circle cx="10" cy="10" r="2.600" fill="#4a8bf0" />
      </>
    ),
  },
  {
    name: 'Clover',
    open: true,
    art: (
      <>
        <path d="M10 10c-1-3-3-7-5-6.500C3 4 4 6 2.500 7 3 10 7 10 10 10zM10 10c0-4 1-8 4-7.500 2 1 0 3 3 4C18 9 13 10 10 10zM10 10c-4 0-8 1-7 4 1 2 3 0 4 3 2 0 3-4 3-7zM10 10c4 0 7 1 7 4-1 2-3 1-4 3-2 0-3-4-3-7z" fill="#6cbf35" />
        <path d="M10 10l1 8" stroke="#3c7f1b" strokeWidth="1.500" />
      </>
    ),
  },
  {
    name: 'Photoshop',
    open: true,
    art: <rect x="3" y="3" width="14" height="14" fill="#0b1e30" stroke="#35b5ee" strokeWidth="1.300" />,
    caption: 'Ps',
  },
  {
    name: 'VLC',
    open: true,
    art: (
      <>
        <path d="M4 13h12l1.500 4.500h-15z" fill="#e8781a" />
        <path d="M10 3h1l3.500 11h-9L9 3z" fill="#f08322" />
        <path d="M8 6.500h4l1 2.500H7.200zM6.500 11h7.200l.6 2H6z" fill="#f3f0ea" />
      </>
    ),
  },
  {
    name: 'CorelDRAW',
    open: true,
    front: true,
    art: (
      <>
        <rect x="3" y="3" width="14" height="14" fill="#5aa53c" />
        <path d="M2 3l8 3 6 10-9-6z" fill="#fff" />
        <path d="M5 3l7 4.500 4 8" stroke="#fff" />
      </>
    ),
  },
  {
    name: 'Snipping Tool',
    open: true,
    art: (
      <>
        <ellipse cx="10" cy="8" rx="6" ry="4.500" fill="#f3ece6" stroke="#d8553a" strokeWidth="1.600" />
        <path d="M10 5v8M7 6l5 6" stroke="#6b6b70" />
        <circle cx="11" cy="15" r="1.700" stroke="#2185c5" strokeWidth="1.200" />
        <circle cx="15" cy="14" r="1.700" stroke="#2185c5" strokeWidth="1.200" />
      </>
    ),
  },
  {
    name: 'Photo Viewer',
    open: true,
    art: (
      <>
        <path d="M3 3l3 3M17 3l-3 3M3 16.500l3-3M17 16.500l-3-3" stroke="#3b8fd1" strokeWidth="2" />
        <rect x="4" y="4.500" width="12" height="10.500" fill="#f3f9fd" stroke="#3b8fd1" strokeWidth="1.300" />
        <path d="M6 6.500h8v3H6z" fill="#7ec0ef" />
        <path d="M6 11l3-2 5 2.500V13H6z" fill="#2f7a6a" />
      </>
    ),
  },
];

function Taskbar() {
  return (
    <nav className="flex h-[29px] shrink-0 items-center border-t border-[#5a6472] bg-[#080e14] text-white">
      <div className="relative h-full w-[55px]">
        <button aria-label="Start" className="absolute -top-1 left-2">
          <svg width="35" height="33" viewBox="0 0 35 33">
            <defs>
              <radialGradient id="orb" cx="50%" cy="75%" r="70%">
                <stop offset="0" stopColor="#3fc0f2" />
                <stop offset=".6" stopColor="#1b5b8e" />
                <stop offset="1" stopColor="#7f9fb8" />
              </radialGradient>
            </defs>
            <circle cx="17.500" cy="17" r="16.500" fill="url(#orb)" stroke="#1d3f5e" />
            <path d="M3 14C6 0 29 0 32 14c-8-3-21 4-29 0z" fill="#fff" opacity=".35" />
            <path d="M10 10c3-2 5-1 7 0l-1.500 6c-2-1-4-1.500-7 0z" fill="#e8552c" />
            <path d="M18.500 10.500c3 1.500 5 1 8 0l-2 6.500c-3 1-5 1-7.500-.500z" fill="#8cc63e" />
            <path d="M8 17.500c3-1.500 5-1 7 0l-1.500 6c-2-1-4-1.500-7 0z" fill="#4aa5e6" />
            <path d="M16.500 18c3 1.500 5 1 7.500 0l-2 6.500c-3 1-5 1-7-.500z" fill="#fbc92f" />
          </svg>
        </button>
      </div>
      {apps.map((app) => (
        <div key={app.name} className="flex h-full w-[43px] shrink-0 px-0.5">
          <button
            aria-label={app.name}
            className={`relative flex h-[27px] flex-1 items-center justify-center rounded-xs ${
              app.front
                ? 'border border-[#c5c5c5] bg-linear-to-br from-[#b5b5b5] to-[#777]'
                : app.open
                  ? 'border border-[#84888d] bg-linear-to-br from-[#5c6065] to-[#191d22]'
                  : ''
            }`}
          >
            <Icon>{app.art}</Icon>
            {app.caption && (
              <span className="absolute inset-0 flex items-center justify-center text-[9px] leading-none font-bold text-[#5cc4f5]">
                {app.caption}
              </span>
            )}
          </button>
          {app.front && (
            <div className="flex w-1.5 shrink-0">
              <span className="h-[27px] w-[3px] rounded-r-xs border-r border-[#a9a9a9] bg-[#55585c]" />
              <span className="h-[27px] w-[3px] rounded-r-xs border-r border-[#77797c] bg-[#2b2e33]" />
            </div>
          )}
        </div>
      ))}
      <div className="flex-1" />
      <button aria-label="Show hidden icons"><Chevron dir="up" size={7} color="#fff" /></button>
      <svg width="16" height="16" viewBox="0 0 16 16" className="ml-[11px]">
        <path d="M2.500 2v13" stroke="#fff" strokeWidth="1.500" />
        <path d="M3 3h5v1.500h6.500L12 7l1 2.500H7.500V8H3z" fill="#fff" />
      </svg>
      <svg width="16" height="16" viewBox="0 0 16 16" className="ml-[6px]" fill="none" stroke="#fff" strokeWidth="1.500">
        <path d="M8 14.500H3v-11h7" />
        <path d="M5 1.500h3" />
        <path d="M8 6h6v3l-2 2h-2L8 9zM9.500 3v3M12.500 3v3M11 11v4" fill="#fff" />
      </svg>
      <svg width="16" height="16" viewBox="0 0 16 16" className="ml-2" fill="#fff">
        <path d="M1 12h2v2H1zM4 10h2v4H4zM7 8h2v6H7zM10 6h2v8h-2zM13 3h2v11h-2z" />
      </svg>
      <svg width="16" height="16" viewBox="0 0 16 16" className="ml-[6px]" fill="none" stroke="#fff">
        <path d="M2 6h3l3-3v10l-3-3H2z" fill="#fff" />
        <path d="M10 6c1 1 1 3 0 4M12 4c2 2 2 6 0 8" />
      </svg>
      <time className="w-[75px] pl-1 text-center">2:07 PM</time>
      <button aria-label="Show desktop" className="h-full w-3 border border-[#5e646b] bg-linear-to-b from-[#4a4e54] to-[#12161b]" />
    </nav>
  );
}

export default function App() {
  return (
    <div className="flex h-screen flex-col overflow-hidden bg-white font-['Open_Sans','Noto_Sans',sans-serif] text-[11px] leading-[15px] text-[#111]">
      <TitleBar />
      <nav className="flex h-[19px] shrink-0 items-center bg-[#d6d6d6] pt-px">
        {menus.map(([before, key, after, width]) => (
          <button key={before + key + after} className={`shrink-0 text-center ${width}`}>
            {before}
            <u>{key}</u>
            {after}
          </button>
        ))}
      </nav>
      <StandardBar />
      <PropertyBar />
      <div className="flex min-h-0 flex-1">
        <Toolbox />
        <main className="flex min-w-0 flex-1 flex-col">
          <DocTabs />
          <div className="flex h-[17px] shrink-0">
            <div className="flex w-[17px] shrink-0 items-center justify-center bg-[#f4f4f4]">
              <svg width="10" height="10" viewBox="0 0 10 10" stroke="#111" fill="none">
                <path d="M3.500 0v10M0 3.500h10" strokeDasharray="1 1.500" />
                <path d="M3 3l6 6M9 6v3H6" />
              </svg>
            </div>
            <div className="flex min-w-0 flex-1"><HorizontalRuler /></div>
          </div>
          <div className="flex min-h-0 flex-1">
            <VerticalRuler />
            <div className="flex min-w-0 flex-1 flex-col border-t border-l border-[#8f8f8f]">
              <Canvas />
              <PageBar />
            </div>
          </div>
          <DocPalette />
        </main>
        <ColorPalette />
      </div>
      <StatusBar />
      <Taskbar />
    </div>
  );
}
